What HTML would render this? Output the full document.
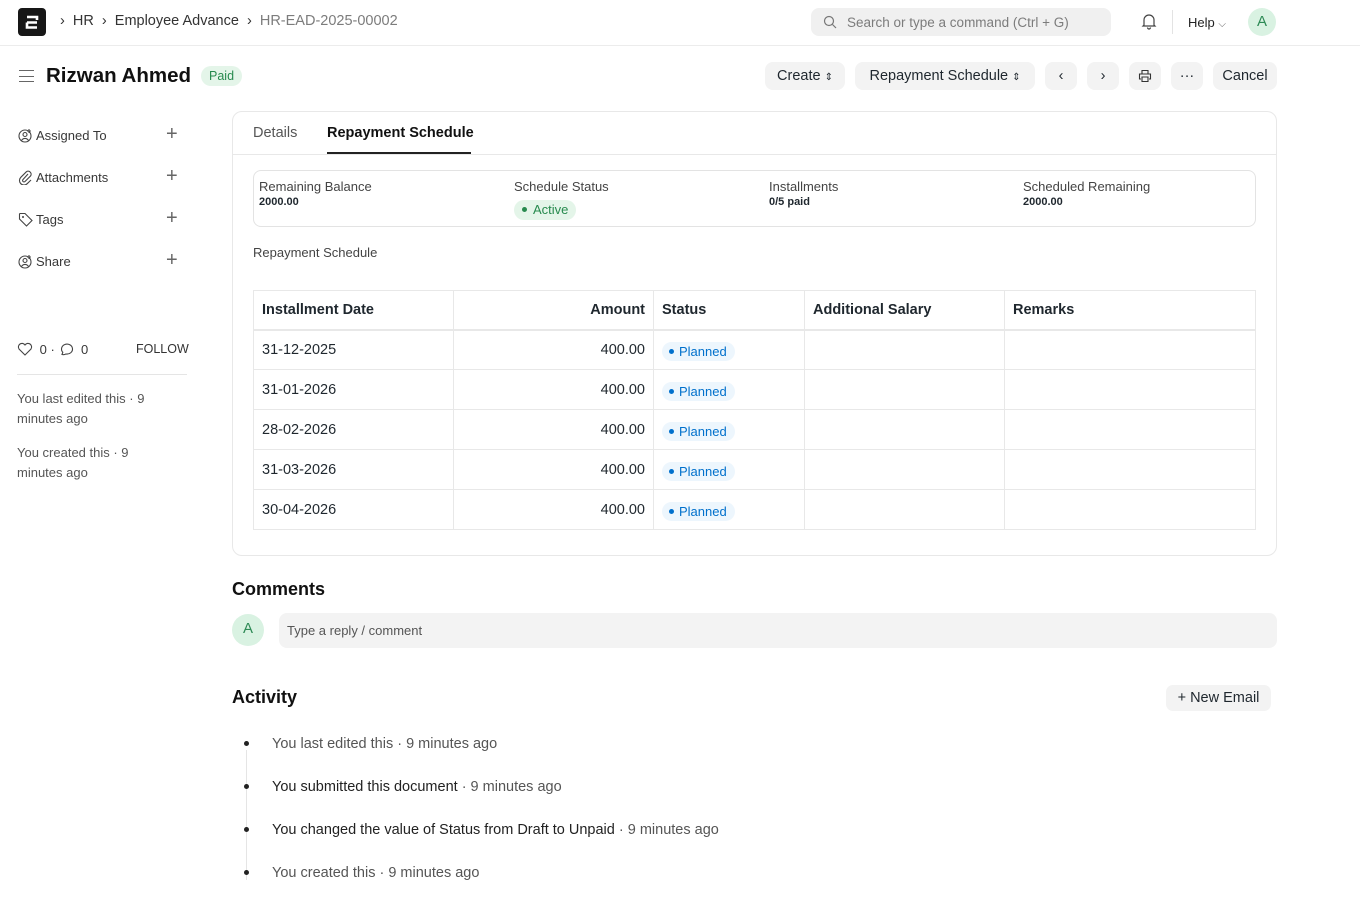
<!DOCTYPE html>
<html><head><meta charset="utf-8"><style>
*{box-sizing:border-box;margin:0;padding:0}
body{width:1360px;height:902px;overflow:hidden;background:#fff;font-family:"Liberation Sans",sans-serif;color:#1f272e;position:relative}
.a{position:absolute;white-space:nowrap}
.btn{position:absolute;top:62px;height:28px;background:#f3f3f3;border-radius:8px;font-size:14.5px;line-height:28px;text-align:center;color:#1f272e}
.side{font-size:13px;color:#383838}
.side svg{vertical-align:-3px;margin-right:3px}
.plus{font-size:20px;color:#666;font-weight:300}
table{border-collapse:collapse;position:absolute;left:253px;top:290px;width:1003px;font-size:14.5px}
td,th{border:1px solid #e8e8e8;height:40px;padding:0 8px;text-align:left}
th{height:39px;font-weight:bold;border-bottom:2px solid #e8e8e8}
.r{text-align:right}
.pl{display:inline-block;background:#edf6fd;color:#0070cc;font-size:13px;border-radius:10px;padding:2px 8px 2px 7px;margin-top:3px}
.pl i{display:inline-block;width:5px;height:5px;border-radius:50%;background:#0070cc;vertical-align:2px;margin-right:5px}
.gray{color:#555}
</style></head><body>
<!-- navbar -->
<svg class="a" style="left:18px;top:8px" width="28" height="28" viewBox="0 0 28 28"><rect width="28" height="28" rx="4" fill="#171717"/><path d="M9 9h10v3M9 14.5h10M9 14.5v5h10" fill="none" stroke="#fff" stroke-width="2.6"/></svg>
<div class="a" style="left:60px;top:13px;font-size:14.5px;color:#333">›&nbsp; HR &nbsp;›&nbsp; Employee Advance &nbsp;›&nbsp; <span style="color:#7c7c7c">HR-EAD-2025-00002</span></div>
<div class="a" style="left:811px;top:8px;width:300px;height:28px;background:#f0f0f0;border-radius:8px"></div>
<svg class="a" style="left:823px;top:15px" width="14" height="14" viewBox="0 0 14 14"><circle cx="6" cy="6" r="4.5" fill="none" stroke="#777" stroke-width="1.2"/><path d="M9.5 9.5L13 13" stroke="#777" stroke-width="1.2"/></svg>
<div class="a" style="left:847px;top:15px;font-size:13.5px;color:#7c7c7c">Search or type a command (Ctrl + G)</div>
<svg class="a" style="left:1141px;top:13px" width="16" height="17" viewBox="0 0 16 17"><path d="M3 12V7a5 5 0 0110 0v5l1 1H2z M6.5 14.5a1.5 1.5 0 003 0" fill="none" stroke="#444" stroke-width="1.2"/></svg>
<div class="a" style="left:1172px;top:10px;width:1px;height:24px;background:#e3e3e3"></div>
<div class="a" style="left:1188px;top:15px;font-size:13px;color:#222">Help <span style="font-size:10px;color:#666">⌵</span></div>
<div class="a" style="left:1248px;top:8px;width:28px;height:28px;border-radius:50%;background:#d9f2e2;color:#2d8a55;font-size:15px;text-align:center;line-height:28px">A</div>
<div class="a" style="left:0;top:45px;width:1360px;height:1px;background:#ececec"></div>
<!-- header -->
<div class="a" style="left:19px;top:70px;width:15px;height:12px;border-top:1.5px solid #666;border-bottom:1.5px solid #666"></div>
<div class="a" style="left:19px;top:75.5px;width:15px;height:1.5px;background:#666"></div>
<div class="a" style="left:46px;top:64px;font-size:20.5px;font-weight:bold;color:#111">Rizwan Ahmed</div>
<div class="a" style="left:201px;top:66px;height:20px;padding:0 8px;background:#e4f5e9;color:#278a4e;border-radius:10px;font-size:12.5px;line-height:20px">Paid</div>
<div class="btn" style="left:765px;width:80px">Create <span style="font-size:10px">⇕</span></div>
<div class="btn" style="left:855px;width:180px">Repayment Schedule <span style="font-size:10px">⇕</span></div>
<div class="btn" style="left:1045px;width:32px">‹</div>
<div class="btn" style="left:1087px;width:32px">›</div>
<div class="btn" style="left:1129px;width:32px"><svg width="14" height="14" viewBox="0 0 14 14" style="margin-top:7px"><path d="M4 5V1.5h6V5M3 10H1.5V5h11v5H11M4 8h6v4.5H4z" fill="none" stroke="#333" stroke-width="1.1"/></svg></div>
<div class="btn" style="left:1171px;width:32px">···</div>
<div class="btn" style="left:1213px;width:64px">Cancel</div>
<!-- sidebar -->
<div class="a side" style="left:18px;top:128px"><svg width="15" height="15" viewBox="0 0 15 15"><circle cx="7" cy="8" r="6" fill="none" stroke="#444" stroke-width="1.1"/><circle cx="7" cy="6.5" r="2" fill="none" stroke="#444" stroke-width="1.1"/><path d="M3.5 12.5a4 4 0 017 0M11 1v4M9 3h4" fill="none" stroke="#444" stroke-width="1.1"/></svg>Assigned To</div><div class="a plus" style="left:166px;top:123px">+</div>
<div class="a side" style="left:18px;top:170px"><svg width="15" height="15" viewBox="0 0 15 15"><path d="M10 4L5 9.5a1.4 1.4 0 002 2L12.5 6a3 3 0 00-4.2-4.2L2.8 7.3a4.5 4.5 0 006.4 6.4L13 10" fill="none" stroke="#444" stroke-width="1.1"/></svg>Attachments</div><div class="a plus" style="left:166px;top:165px">+</div>
<div class="a side" style="left:18px;top:212px"><svg width="15" height="15" viewBox="0 0 15 15"><path d="M1.5 2v5l7 7 5.5-5.5-7-7H2z" fill="none" stroke="#444" stroke-width="1.1"/><circle cx="5" cy="5" r="1" fill="#444"/></svg>Tags</div><div class="a plus" style="left:166px;top:207px">+</div>
<div class="a side" style="left:18px;top:254px"><svg width="15" height="15" viewBox="0 0 15 15"><circle cx="7" cy="8" r="6" fill="none" stroke="#444" stroke-width="1.1"/><circle cx="7" cy="6.5" r="2" fill="none" stroke="#444" stroke-width="1.1"/><path d="M3.5 12.5a4 4 0 017 0M11 1v4M9 3h4" fill="none" stroke="#444" stroke-width="1.1"/></svg>Share</div><div class="a plus" style="left:166px;top:249px">+</div>
<div class="a side" style="left:17px;top:342px"><svg width="16" height="14" viewBox="0 0 16 14" style="vertical-align:-2px"><path d="M8 13L2 7a3.3 3.3 0 016-4 3.3 3.3 0 016 4z" fill="none" stroke="#444" stroke-width="1.1"/></svg> 0 · <svg width="16" height="14" viewBox="0 0 16 14" style="vertical-align:-2px"><path d="M4 12.5l.8-2.2A5.5 5 0 118 12a6 6 0 01-4 .5z" fill="none" stroke="#444" stroke-width="1.1"/></svg> 0</div>
<div class="a" style="left:136px;top:342px;font-size:12.5px;color:#333">FOLLOW</div>
<div class="a" style="left:17px;top:374px;width:170px;height:1px;background:#e5e5e5"></div>
<div class="a side" style="left:17px;top:389px;line-height:20px;color:#555">You last edited this · 9<br>minutes ago</div>
<div class="a side" style="left:17px;top:443px;line-height:20px;color:#555">You created this · 9<br>minutes ago</div>
<!-- card -->
<div class="a" style="left:232px;top:111px;width:1045px;height:445px;border:1px solid #e8e8e8;border-radius:10px"></div>
<div class="a" style="left:233px;top:154px;width:1043px;height:1px;background:#e8e8e8"></div>
<div class="a" style="left:253px;top:125px;font-size:14.5px;color:#555">Details</div>
<div class="a" style="left:327px;top:125px;font-size:14.5px;color:#111;font-weight:600">Repayment Schedule</div>
<div class="a" style="left:327px;top:152px;width:144px;height:2px;background:#222"></div>
<div class="a" style="left:253px;top:170px;width:1003px;height:57px;border:1px solid #e3e3e3;border-radius:8px"></div>
<div class="a" style="left:259px;top:179px;font-size:13px;color:#444">Remaining Balance</div>
<div class="a" style="left:259px;top:196px;font-size:11px;font-weight:bold">2000.00</div>
<div class="a" style="left:514px;top:179px;font-size:13px;color:#444">Schedule Status</div>
<div class="a" style="left:514px;top:200px;height:20px;padding:0 8px;background:#e4f5e9;color:#278a4e;border-radius:10px;font-size:13px;line-height:20px"><span style="display:inline-block;width:5px;height:5px;border-radius:50%;background:#278a4e;vertical-align:2px;margin-right:6px"></span>Active</div>
<div class="a" style="left:769px;top:179px;font-size:13px;color:#444">Installments</div>
<div class="a" style="left:769px;top:196px;font-size:11px;font-weight:bold">0/5 paid</div>
<div class="a" style="left:1023px;top:179px;font-size:13px;color:#444">Scheduled Remaining</div>
<div class="a" style="left:1023px;top:196px;font-size:11px;font-weight:bold">2000.00</div>
<div class="a" style="left:253px;top:245px;font-size:13px;color:#444">Repayment Schedule</div>
<table>
<tr><th style="width:200px">Installment Date</th><th class="r" style="width:200px">Amount</th><th style="width:151px">Status</th><th style="width:200px">Additional Salary</th><th>Remarks</th></tr>
<tr><td>31-12-2025</td><td class="r">400.00</td><td><span class="pl"><i></i>Planned</span></td><td></td><td></td></tr>
<tr><td>31-01-2026</td><td class="r">400.00</td><td><span class="pl"><i></i>Planned</span></td><td></td><td></td></tr>
<tr><td>28-02-2026</td><td class="r">400.00</td><td><span class="pl"><i></i>Planned</span></td><td></td><td></td></tr>
<tr><td>31-03-2026</td><td class="r">400.00</td><td><span class="pl"><i></i>Planned</span></td><td></td><td></td></tr>
<tr><td>30-04-2026</td><td class="r">400.00</td><td><span class="pl"><i></i>Planned</span></td><td></td><td></td></tr>
</table>
<!-- comments -->
<div class="a" style="left:232px;top:579px;font-size:18px;font-weight:bold;color:#111">Comments</div>
<div class="a" style="left:232px;top:614px;width:32px;height:32px;border-radius:50%;background:#d9f2e2;color:#2d8a55;font-size:15px;text-align:center;line-height:30px">A</div>
<div class="a" style="left:279px;top:613px;width:998px;height:35px;background:#f3f3f3;border-radius:8px"></div>
<div class="a" style="left:287px;top:623px;font-size:13px;color:#555">Type a reply / comment</div>
<div class="a" style="left:232px;top:687px;font-size:18px;font-weight:bold;color:#111">Activity</div>
<div class="a" style="left:1166px;top:685px;width:105px;height:26px;background:#f3f3f3;border-radius:7px;font-size:14.5px;line-height:26px;text-align:center">+ New Email</div>
<div class="a" style="left:246px;top:750px;width:1px;height:130px;background:#e5e5e5"></div>
<div class="a" style="left:244px;top:741px;width:5px;height:5px;background:#222;border-radius:50%"></div>
<div class="a" style="left:244px;top:784px;width:5px;height:5px;background:#222;border-radius:50%"></div>
<div class="a" style="left:244px;top:827px;width:5px;height:5px;background:#222;border-radius:50%"></div>
<div class="a" style="left:244px;top:870px;width:5px;height:5px;background:#222;border-radius:50%"></div>
<div class="a gray" style="left:272px;top:736px;font-size:14.5px">You last edited this · 9 minutes ago</div>
<div class="a gray" style="left:272px;top:779px;font-size:14.5px"><span style="color:#222">You submitted this document</span> · 9 minutes ago</div>
<div class="a gray" style="left:272px;top:822px;font-size:14.5px"><span style="color:#222">You changed the value of Status from Draft to Unpaid</span> · 9 minutes ago</div>
<div class="a gray" style="left:272px;top:865px;font-size:14.5px">You created this · 9 minutes ago</div>
</body></html>
